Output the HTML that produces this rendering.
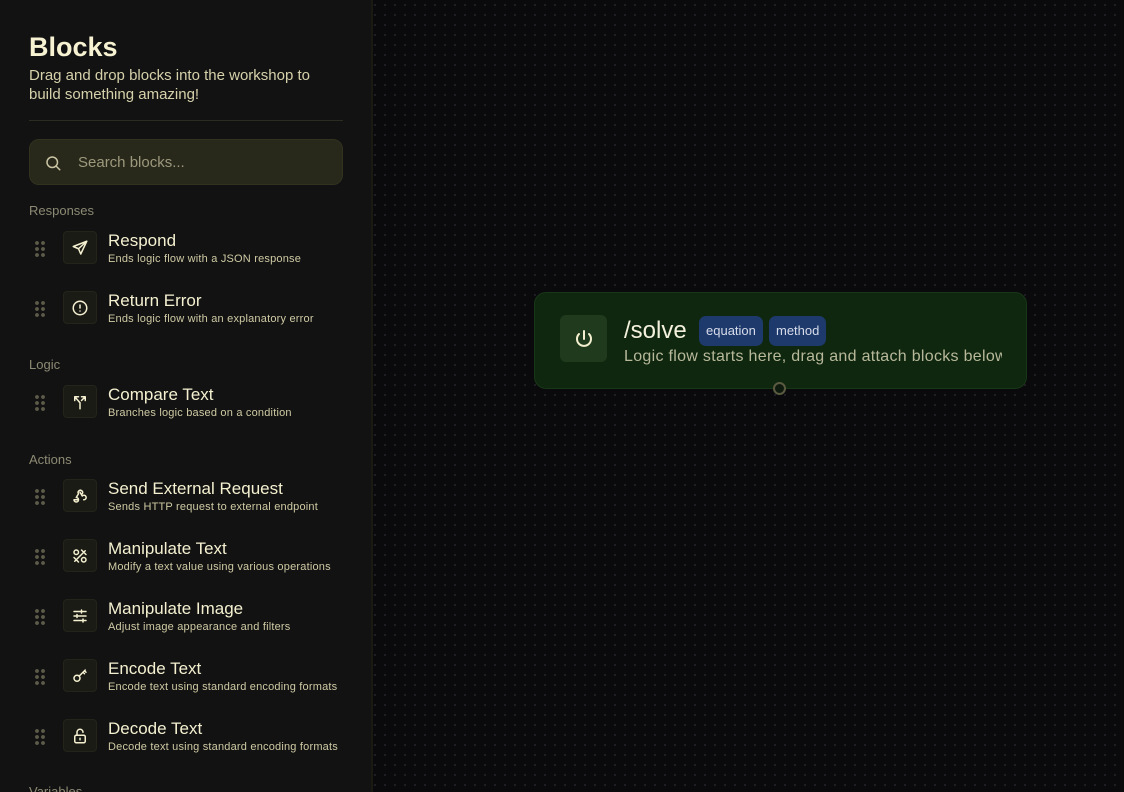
<!DOCTYPE html>
<html><head><meta charset="utf-8"><style>
*{box-sizing:border-box;margin:0;padding:0}
html,body{width:1124px;height:792px;overflow:hidden}
body{background:#0a0a0c;font-family:"Liberation Sans",sans-serif;position:relative;
background-image:radial-gradient(circle,#1f1f26 1px,transparent 1.2px);background-size:10px 10px}
.side{position:absolute;left:0;top:0;width:373px;height:792px;background:#121212;border-right:2px solid #1a1a13}
h1{position:absolute;left:29px;top:32px;font-size:27px;font-weight:bold;color:#f6f2d2}
.sub{position:absolute;left:29px;top:66px;font-size:15px;line-height:19px;color:#d6d1ab;width:300px}
.hr{position:absolute;left:29px;top:120px;width:314px;height:1px;background:#2c2c22}
.search{position:absolute;left:29px;top:139px;width:314px;height:46px;border-radius:10px;background:#28281b;border:1px solid #32321f}
.search span{position:absolute;left:48px;top:14px;font-size:15px;color:#9d997c}
.cat{position:absolute;left:29px;font-size:13px;color:#8d8a74}
.item{position:absolute;left:34px;width:320px;height:40px}
.dots{position:absolute;left:0;top:9px;width:12px;height:18px;
background-image:radial-gradient(circle,#5c5a48 1.8px,transparent 2px);background-size:6px 6px}
.ic{position:absolute;left:29px;top:0;width:34px;height:33px;border-radius:4px;background:#1b1b16;border:1px solid #24241b;display:flex;align-items:center;justify-content:center}
.t{position:absolute;left:74px;top:0;font-size:17px;color:#f4f0d0}
.d{position:absolute;left:74px;top:22px;font-size:11px;color:#cfcaa4;white-space:nowrap;letter-spacing:.2px}
.node{position:absolute;left:534px;top:292px;width:493px;height:97px;border-radius:12px;background:#0f270f;border:1px solid #183618}
.pw{position:absolute;left:25px;top:22px;width:47px;height:47px;border-radius:6px;background:#203a1d;display:flex;align-items:center;justify-content:center}
.nt{position:absolute;left:89px;top:24px;font-size:24px;color:#f3f0dc}
.tag{position:absolute;top:23px;height:30px;border-radius:7px;background:#1e3a6c;color:#d7dcea;font-size:13px;line-height:30px;padding:0 7px}
.nd{position:absolute;left:89px;top:55px;font-size:16px;color:#b8b89a;white-space:nowrap;width:378px;overflow:hidden;letter-spacing:.3px}
.port{position:absolute;left:773px;top:382px;width:13px;height:13px;border-radius:50%;border:2px solid #5a5a40;background:#0f1a0f}
svg{stroke:#f4f0d0;fill:none;stroke-width:2;stroke-linecap:round;stroke-linejoin:round}
</style></head><body>
<div class="side">
<h1>Blocks</h1>
<div class="sub">Drag and drop blocks into the workshop to build something amazing!</div>
<div class="hr"></div>
<div class="search"><svg style="position:absolute;left:14px;top:14px;stroke:#c9c4a4" width="18" height="18" viewBox="0 0 24 24"><circle cx="11" cy="11" r="7"/><path d="M21 21l-5-5"/></svg><span>Search blocks...</span></div>
<div class="cat" style="top:203px">Responses</div>
<div class="item" style="top:231px"><div class="dots"></div><div class="ic"><svg width="18" height="18" viewBox="0 0 24 24"><path d="M21 3L3 10l7 3 3 7z"/><path d="M10 13l11-10"/></svg></div><div class="t">Respond</div><div class="d">Ends logic flow with a JSON response</div></div>
<div class="item" style="top:291px"><div class="dots"></div><div class="ic"><svg width="18" height="18" viewBox="0 0 24 24"><circle cx="12" cy="12" r="9"/><path d="M12 8v4M12 16h0"/></svg></div><div class="t">Return Error</div><div class="d">Ends logic flow with an explanatory error</div></div>
<div class="cat" style="top:357px">Logic</div>
<div class="item" style="top:385px"><div class="dots"></div><div class="ic"><svg width="18" height="18" viewBox="0 0 24 24"><path d="M12 21v-8L5 5M5 10V5h5M19 5l-5 5M14 5h5v5"/></svg></div><div class="t">Compare Text</div><div class="d">Branches logic based on a condition</div></div>
<div class="cat" style="top:452px">Actions</div>
<div class="item" style="top:479px"><div class="dots"></div><div class="ic"><svg width="18" height="18" viewBox="0 0 24 24"><path d="M9 17H4a3 3 0 1 0 3-3l3-5a3 3 0 1 1 5 0M12 7l3 5a3 3 0 1 1 2 5"/></svg></div><div class="t">Send External Request</div><div class="d">Sends HTTP request to external endpoint</div></div>
<div class="item" style="top:539px"><div class="dots"></div><div class="ic"><svg width="18" height="18" viewBox="0 0 24 24"><path d="M5 19L19 5M7 4a3 3 0 1 0 0 6 3 3 0 0 0 0-6zM17 14a3 3 0 1 0 0 6 3 3 0 0 0 0-6zM4 14l6 6M14 4l6 6"/></svg></div><div class="t">Manipulate Text</div><div class="d">Modify a text value using various operations</div></div>
<div class="item" style="top:599px"><div class="dots"></div><div class="ic"><svg width="18" height="18" viewBox="0 0 24 24"><path d="M4 6h16M4 12h16M4 18h16M14 4v4M8 10v4M16 16v4"/></svg></div><div class="t">Manipulate Image</div><div class="d">Adjust image appearance and filters</div></div>
<div class="item" style="top:659px"><div class="dots"></div><div class="ic"><svg width="18" height="18" viewBox="0 0 24 24"><circle cx="8" cy="15" r="4"/><path d="M11 12l8-8M16 7l2 2M18 5l2 2"/></svg></div><div class="t">Encode Text</div><div class="d">Encode text using standard encoding formats</div></div>
<div class="item" style="top:719px"><div class="dots"></div><div class="ic"><svg width="18" height="18" viewBox="0 0 24 24"><rect x="5" y="11" width="14" height="10" rx="2"/><path d="M8 11V7a4 4 0 0 1 8 0M12 15v2"/></svg></div><div class="t">Decode Text</div><div class="d">Decode text using standard encoding formats</div></div>
<div class="cat" style="top:784px">Variables</div>
</div>
<div class="node">
<div class="pw"><svg width="24" height="24" viewBox="0 0 24 24"><path d="M12 4v8M7 7a7 7 0 1 0 10 0"/></svg></div>
<div class="nt">/solve</div>
<div class="tag" style="left:164px">equation</div>
<div class="tag" style="left:234px">method</div>
<div class="nd">Logic flow starts here, drag and attach blocks below</div>
</div>
<div class="port"></div>
</body></html>
